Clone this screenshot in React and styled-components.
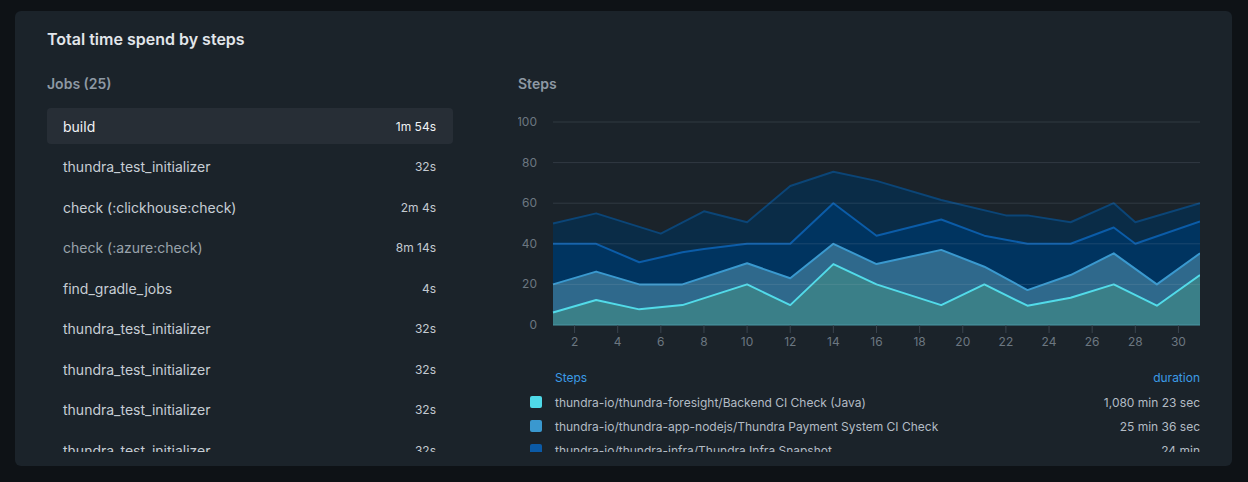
import React from "react";
import styled, { createGlobalStyle } from "styled-components";

const jobs = [
  { name: "build", time: "1m 54s", active: true },
  { name: "thundra_test_initializer", time: "32s" },
  { name: "check (:clickhouse:check)", time: "2m 4s" },
  { name: "check (:azure:check)", time: "8m 14s", muted: true },
  { name: "find_gradle_jobs", time: "4s" },
  { name: "thundra_test_initializer", time: "32s" },
  { name: "thundra_test_initializer", time: "32s" },
  { name: "thundra_test_initializer", time: "32s" },
  { name: "thundra_test_initializer", time: "32s" },
];

const legend = [
  { color: "#4fd9e8", name: "thundra-io/thundra-foresight/Backend CI Check (Java)", time: "1,080 min 23 sec" },
  { color: "#3a98cf", name: "thundra-io/thundra-app-nodejs/Thundra Payment System CI Check", time: "25 min 36 sec" },
  { color: "#0b5aa6", name: "thundra-io/thundra-infra/Thundra Infra Snapshot", time: "24 min" },
];

// stacked series, drawn back to front
const series = [
  {
    fill: "#0a2c47",
    line: "#0b4577",
    pts: [[1, 50], [3, 55], [6, 45], [8, 56], [10, 50.6], [12, 68.5], [14, 75.5], [16, 71], [19, 61.6], [22, 54], [23, 54], [25, 50.6], [27, 60], [28, 50.6], [31, 60]],
  },
  {
    fill: "#003460",
    line: "#0b5ca8",
    pts: [[1, 40], [3, 40], [5, 30.9], [7, 35.8], [8, 37.4], [10, 40], [12, 40], [14, 60], [16, 44], [19, 52], [21, 44], [23, 40], [25, 40], [27, 48], [28, 40], [31, 51]],
  },
  {
    fill: "#2f698c",
    line: "#3a99cf",
    pts: [[1, 20], [3, 26.3], [5, 20], [7, 20], [10, 30.4], [12, 23], [14, 40], [16, 30], [19, 37], [21, 28.7], [23, 17.2], [25, 24.6], [27, 35.3], [29, 20], [31, 35.3]],
  },
  {
    fill: "#3a7f88",
    line: "#52dbe9",
    pts: [[1, 6.2], [3, 12.3], [5, 7.7], [7, 9.8], [10, 20], [12, 9.8], [14, 30], [16, 20], [19, 9.8], [21, 20], [23, 9.5], [25, 13.4], [27, 20], [29, 9.5], [31, 24.6]],
  },
];

const W = 682;
const H = 250;
const left = 35;
const top = 14;
const bottom = 217;
const sx = (v) => left + ((v - 1) * (W - left)) / 30;
const sy = (v) => bottom - ((bottom - top) * v) / 100;

const GlobalStyle = createGlobalStyle`
  * { box-sizing: border-box; }
  html, body {
    margin: 0;
    background: #0e1216;
    font-family: Inter, "Noto Sans", sans-serif;
  }
`;

const Page = styled.div`
  padding: 11px 16px 16px 15px;
  background: #0e1216;
`;

const Card = styled.section`
  background: #1b232a;
  border-radius: 6px;
  padding: 16px 32px 14px 32px;
`;

const Title = styled.h2`
  margin: 0 0 23px;
  font-size: 16px;
  line-height: 24px;
  font-weight: 600;
  color: #e2e6ea;
`;

const Columns = styled.div`
  display: grid;
  grid-template-columns: 406px 1fr;
  column-gap: 65px;
  height: 378px;
`;

const Column = styled.div`
  display: flex;
  flex-direction: column;
  overflow: hidden;
  min-height: 0;
`;

const Heading = styled.h3`
  margin: 0 0 14px;
  font-size: 14px;
  line-height: 20px;
  font-weight: 600;
  color: #8e99a4;
`;

const JobList = styled.ul`
  list-style: none;
  margin: 0;
  padding: 0;
  display: flex;
  flex-direction: column;
  gap: 4.5px;
  overflow: hidden;
  flex: 1;
`;

const JobRow = styled.li`
  flex: none;
  height: 36px;
  display: flex;
  align-items: center;
  justify-content: space-between;
  padding: 0 17px 0 16px;
  border-radius: 4px;
  background: ${(p) => (p.$active ? "#272e36" : "transparent")};
`;

const JobName = styled.span`
  font-size: 14px;
  color: ${(p) => (p.$active ? "#f1f3f5" : p.$muted ? "#9aa3ac" : "#c7ced5")};
`;

const JobTime = styled.span`
  font-size: 12px;
  color: ${(p) => (p.$active ? "#f1f3f5" : "#c3cad1")};
`;

const ChartSvg = styled.svg`
  display: block;
  flex: none;
  font-family: Inter, "Noto Sans", sans-serif;
`;

const Legend = styled.div`
  margin: 10px 0 0 12px;
  display: flex;
  flex-direction: column;
  overflow: hidden;
  flex: 1;
`;

const LegendHead = styled.div`
  display: flex;
  justify-content: space-between;
  padding-left: 25px;
  font-size: 12px;
  line-height: 20px;
  color: #3b9be6;
  margin-bottom: 2px;
`;

const LegendRow = styled.div`
  flex: none;
  display: flex;
  align-items: center;
  height: 24px;
  font-size: 12px;
  color: #b3bcc5;
`;

const Swatch = styled.span`
  width: 12px;
  height: 12px;
  border-radius: 2px;
  background: ${(p) => p.$color};
  margin-right: 13px;
  flex: none;
`;

const LegendName = styled.span`
  flex: 1;
  white-space: nowrap;
`;

function Chart() {
  const grid = [0, 20, 40, 60, 80, 100];
  const ticks = Array.from({ length: 15 }, (_, i) => (i + 1) * 2);
  return (
    <ChartSvg width={W} height={H} viewBox={`0 0 ${W} ${H}`}>
      {series.map((s, i) => {
        const line = s.pts.map(([x, v]) => `${sx(x)},${sy(v)}`).join(" ");
        const area = `${sx(1)},${bottom} ${line} ${sx(31)},${bottom}`;
        return (
          <g key={i}>
            <polygon points={area} fill={s.fill} />
            <polyline points={line} fill="none" stroke={s.line} strokeWidth="2" strokeLinejoin="round" />
          </g>
        );
      })}
      {grid.map((g) => (
        <g key={g}>
          {g > 0 && (
            <line x1={left} x2={W} y1={sy(g)} y2={sy(g)} stroke="rgba(160,175,190,0.16)" strokeWidth="1" />
          )}
          <text x={19} y={sy(g) + 4} textAnchor="end" fontSize="12" fill="#6c7781">
            {g}
          </text>
        </g>
      ))}
      <line x1={left} x2={W} y1={bottom} y2={bottom} stroke="#4a97a3" strokeWidth="1" />
      {ticks.map((t) => (
        <g key={t}>
          <line x1={sx(t)} x2={sx(t)} y1={bottom} y2={bottom + 8} stroke="#3a444e" strokeWidth="1" />
          <text x={sx(t)} y={bottom + 21} textAnchor="middle" fontSize="12" fill="#6c7781">
            {t}
          </text>
        </g>
      ))}
    </ChartSvg>
  );
}

export default function App() {
  return (
    <Page>
      <GlobalStyle />
      <Card>
        <Title>Total time spend by steps</Title>
        <Columns>
          <Column>
            <Heading>Jobs (25)</Heading>
            <JobList>
              {jobs.map((j, i) => (
                <JobRow key={i} $active={j.active}>
                  <JobName $active={j.active} $muted={j.muted}>{j.name}</JobName>
                  <JobTime $active={j.active}>{j.time}</JobTime>
                </JobRow>
              ))}
            </JobList>
          </Column>
          <Column>
            <Heading>Steps</Heading>
            <Chart />
            <Legend>
              <LegendHead>
                <span>Steps</span>
                <span>duration</span>
              </LegendHead>
              {legend.map((l, i) => (
                <LegendRow key={i}>
                  <Swatch $color={l.color} />
                  <LegendName>{l.name}</LegendName>
                  <span>{l.time}</span>
                </LegendRow>
              ))}
            </Legend>
          </Column>
        </Columns>
      </Card>
    </Page>
  );
}
